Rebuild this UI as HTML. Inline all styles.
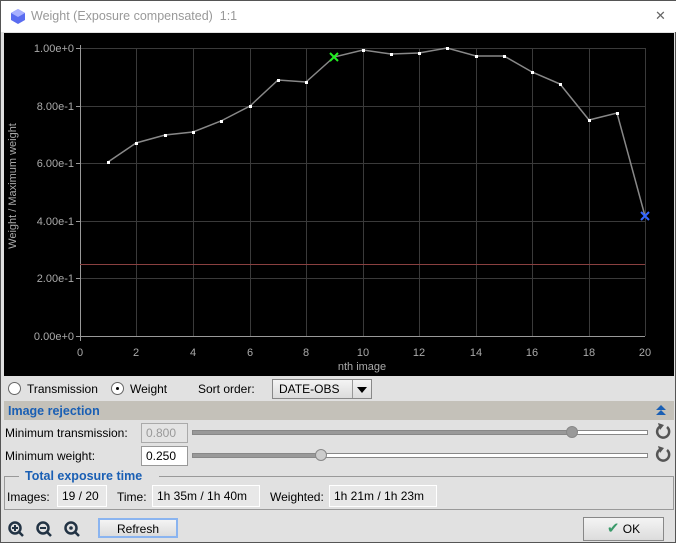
<!DOCTYPE html>
<html><head><style>
*{margin:0;padding:0;box-sizing:border-box}
body{width:676px;height:543px;background:#e1e1e1;font-family:"Liberation Sans",sans-serif;font-size:12px;color:#000;position:relative;overflow:hidden;border:1px solid #555}
.a{position:absolute}
.tb{left:0;top:0;width:676px;height:31px;background:#fff}
.box{background:#fff;border:1px solid #999;height:20px;line-height:18px;padding-left:4px}
.btn{border:1px solid #888;background:linear-gradient(#f4f4f4,#dcdcdc);text-align:center}
.blue{color:#1a5fb4;font-weight:bold;font-size:12.5px}
.ro{background:#e8e8e8;border:1px solid #fff;height:22px;line-height:20px;padding:0 4px}
</style></head><body>
<div class="a tb"></div>
<svg class="a" style="left:9px;top:7px" width="16" height="17" viewBox="0 0 16 17"><polygon points="8,1 15,5 15,12 8,16 1,12 1,5" fill="#5a6cf0"/><polygon points="8,1 15,5 8,9 1,5" fill="#a8b0ff"/></svg>
<div class="a" style="left:30px;top:8px;color:#999;font-size:12.5px">Weight (Exposure compensated)&nbsp; 1:1</div>
<div class="a" style="left:654px;top:7px;font-size:13px;color:#666">✕</div>
<svg class="a" style="left:3px;top:32px" width="670" height="343" viewBox="3 32 670 343">
<rect x="3" y="32" width="670" height="343" fill="#000"/>
<g stroke="#3a3a3a" stroke-width="1">
<line x1="135.5" y1="47" x2="135.5" y2="335"/><line x1="192.5" y1="47" x2="192.5" y2="335"/><line x1="249.5" y1="47" x2="249.5" y2="335"/><line x1="305.5" y1="47" x2="305.5" y2="335"/><line x1="362.5" y1="47" x2="362.5" y2="335"/><line x1="418.5" y1="47" x2="418.5" y2="335"/><line x1="475.5" y1="47" x2="475.5" y2="335"/><line x1="531.5" y1="47" x2="531.5" y2="335"/><line x1="588.5" y1="47" x2="588.5" y2="335"/><line x1="644.5" y1="47" x2="644.5" y2="335"/>
<line x1="79" y1="47.5" x2="644" y2="47.5"/><line x1="79" y1="105.5" x2="644" y2="105.5"/><line x1="79" y1="162.5" x2="644" y2="162.5"/><line x1="79" y1="220.5" x2="644" y2="220.5"/><line x1="79" y1="277.5" x2="644" y2="277.5"/>
</g>
<g stroke="#999"><line x1="79.5" y1="44" x2="79.5" y2="340"/><line x1="75" y1="335.5" x2="644" y2="335.5"/>
<line x1="75" y1="47.5" x2="79" y2="47.5"/><line x1="75" y1="105.5" x2="79" y2="105.5"/><line x1="75" y1="162.5" x2="79" y2="162.5"/><line x1="75" y1="220.5" x2="79" y2="220.5"/><line x1="75" y1="277.5" x2="79" y2="277.5"/></g>
<line x1="79" y1="263.5" x2="644" y2="263.5" stroke="#8a4040"/>
<g fill="#aaa" font-family="Liberation Sans" font-size="11" text-anchor="end">
<text x="73" y="51">1.00e+0</text><text x="73" y="109">8.00e-1</text><text x="73" y="166">6.00e-1</text><text x="73" y="224">4.00e-1</text><text x="73" y="281">2.00e-1</text><text x="73" y="339">0.00e+0</text></g>
<g fill="#aaa" font-family="Liberation Sans" font-size="11" text-anchor="middle">
<text x="79" y="355">0</text><text x="135" y="355">2</text><text x="192" y="355">4</text><text x="249" y="355">6</text><text x="305" y="355">8</text><text x="362" y="355">10</text><text x="418" y="355">12</text><text x="475" y="355">14</text><text x="531" y="355">16</text><text x="588" y="355">18</text><text x="644" y="355">20</text>
<text x="361" y="369">nth image</text>
<text transform="translate(15,185) rotate(-90)">Weight / Maximum weight</text></g>
<polyline fill="none" stroke="#888" stroke-width="1.5" points="107,161 135,142 164,134 192,131 220,120 249,105 277,79 305,81 333,56 362,49 390,53 418,52 446,47 475,55 503,55 531,71 559,83 588,119 616,112 644,215"/>
<g fill="#fff"><rect x="106" y="160" width="3" height="3"/><rect x="134" y="141" width="3" height="3"/><rect x="163" y="133" width="3" height="3"/><rect x="191" y="130" width="3" height="3"/><rect x="219" y="119" width="3" height="3"/><rect x="248" y="104" width="3" height="3"/><rect x="276" y="78" width="3" height="3"/><rect x="304" y="80" width="3" height="3"/><rect x="361" y="48" width="3" height="3"/><rect x="389" y="52" width="3" height="3"/><rect x="417" y="51" width="3" height="3"/><rect x="445" y="46" width="3" height="3"/><rect x="474" y="54" width="3" height="3"/><rect x="502" y="54" width="3" height="3"/><rect x="530" y="70" width="3" height="3"/><rect x="558" y="82" width="3" height="3"/><rect x="587" y="118" width="3" height="3"/><rect x="615" y="111" width="3" height="3"/></g>
<path d="M329,52 L337,60 M337,52 L329,60" stroke="#22ee22" stroke-width="2"/>
<path d="M640,211 L648,219 M648,211 L640,219" stroke="#3366ff" stroke-width="2"/>
</svg>
<div class="a" style="left:7px;top:381px;width:13px;height:13px;border-radius:50%;border:1px solid #666;background:#fff"></div>
<div class="a" style="left:26px;top:381px">Transmission</div>
<div class="a" style="left:110px;top:381px;width:13px;height:13px;border-radius:50%;border:1px solid #666;background:#fff"><div style="margin:4px;width:3px;height:3px;background:#000;border-radius:50%"></div></div>
<div class="a" style="left:129px;top:381px">Weight</div>
<div class="a" style="left:197px;top:381px">Sort order:</div>
<div class="a btn" style="left:271px;top:378px;width:100px;height:20px;text-align:left;padding-left:6px;line-height:18px">DATE-OBS<span style="position:absolute;left:79px;top:0;width:1px;height:18px;background:#999"></span><span style="position:absolute;left:84px;top:7px;border:5px solid transparent;border-top:6px solid #000;border-bottom:0"></span></div>
<div class="a" style="left:3px;top:400px;width:670px;height:19px;background:#c4c1b9"></div>
<div class="a blue" style="left:7px;top:403px">Image rejection</div>
<svg class="a" style="left:654px;top:404px" width="12" height="11"><path d="M6,0 L11,5 L1,5Z M6,5 L11,10 L1,10Z" fill="#1a5fb4"/></svg>
<div class="a" style="left:4px;top:425px">Minimum transmission:</div>
<div class="a box" style="left:140px;top:422px;width:47px;background:#e4e4e4;color:#999;border-color:#aaa">0.800</div>
<div class="a" style="left:191px;top:429px;width:456px;height:5px;border:1px solid #888;background:#fff"><div style="width:380px;height:3px;background:#999"></div></div>
<div class="a" style="left:565px;top:425px;width:12px;height:12px;border-radius:50%;background:#999;border:1px solid #888"></div>
<div class="a" style="left:4px;top:448px">Minimum weight:</div>
<div class="a box" style="left:140px;top:445px;width:47px">0.250</div>
<div class="a" style="left:191px;top:452px;width:456px;height:5px;border:1px solid #888;background:#fff"><div style="width:128px;height:3px;background:#999"></div></div>
<div class="a" style="left:314px;top:448px;width:12px;height:12px;border-radius:50%;background:#ccc;border:1px solid #888"></div>
<svg class="a" style="left:653px;top:421px" width="18" height="42"><g fill="none" stroke="#555" stroke-width="2.5"><path d="M7,4 A6,6 0 1 0 13,5"/><path d="M7,27 A6,6 0 1 0 13,28"/></g><path d="M4,1 L10,3 L6,8Z M4,24 L10,26 L6,31Z" fill="#555"/></svg>
<div class="a" style="left:3px;top:475px;width:670px;height:34px;border:1px solid #999;border-top:none"></div>
<div class="a" style="left:3px;top:475px;width:15px;border-top:1px solid #999"></div>
<div class="a" style="left:158px;top:475px;width:515px;border-top:1px solid #999"></div>
<div class="a blue" style="left:24px;top:468px">Total exposure time</div>
<div class="a" style="left:6px;top:489px">Images:</div>
<div class="a ro" style="left:56px;top:484px;width:50px">19 / 20</div>
<div class="a" style="left:116px;top:489px">Time:</div>
<div class="a ro" style="left:151px;top:484px;width:108px">1h 35m / 1h 40m</div>
<div class="a" style="left:269px;top:489px">Weighted:</div>
<div class="a ro" style="left:328px;top:484px;width:108px">1h 21m / 1h 23m</div>
<svg class="a" style="left:6px;top:519px" width="75" height="18"><g fill="none" stroke="#234" stroke-width="2.5"><circle cx="8" cy="8" r="5.5"/><circle cx="36" cy="8" r="5.5"/><circle cx="64" cy="8" r="5.5"/><path d="M12,12 L16,16 M40,12 L44,16 M68,12 L72,16"/></g><path d="M5,8 H11 M8,5 V11 M33,8 H39" stroke="#234" stroke-width="2"/><circle cx="64" cy="8" r="1.8" fill="#234"/></svg>
<div class="a btn" style="left:97px;top:517px;width:80px;height:20px;line-height:18px;border:2px solid #8ab4f0">Refresh</div>
<div class="a btn" style="left:582px;top:516px;width:81px;height:24px;line-height:22px"><span style="color:#3a9a6a;font-size:15px">✔</span> OK</div>
</body></html>
